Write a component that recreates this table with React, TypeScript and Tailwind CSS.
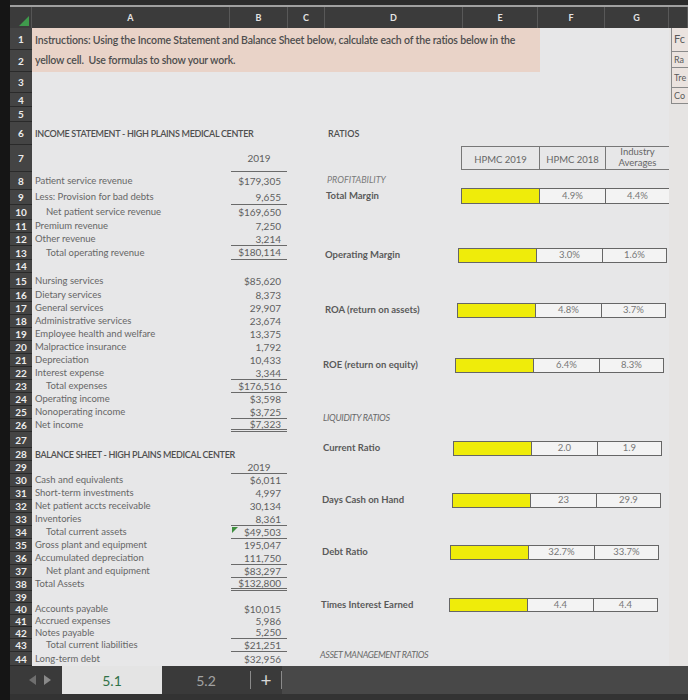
const ROW_H = [
  22, 22, 21, 14, 15, 23, 27, 18, 15, 15, 13, 13, 14, 13, 16,
  13, 13, 13, 13, 13, 13, 13, 13, 13, 13, 13,
  16, 13,
  13, 13, 13, 13, 13, 13, 13, 13, 13, 13,
  12, 12, 12, 12, 13, 14,
];

const HEIGHT_CLS: Record<number, string> = {
  11: "h-[11px]",
  12: "h-[12px]",
  13: "h-[13px]",
  14: "h-[14px]",
  15: "h-[15px]",
  16: "h-[16px]",
  18: "h-[18px]",
  21: "h-[21px]",
  22: "h-[22px]",
  23: "h-[23px]",
  27: "h-[27px]",
};

type Line = "single" | "double" | undefined;
type SheetRow = {
  label?: string;
  indent?: boolean;
  value?: string;
  center?: boolean;
  line?: Line;
  heading?: boolean;
  flag?: boolean;
};

// rows 6..44 of columns A and B
const SHEET: SheetRow[] = [
  { label: "INCOME STATEMENT - HIGH PLAINS MEDICAL CENTER", heading: true },
  { value: "2019", center: true, line: "single" },
  { label: "Patient service revenue", value: "$179,305" },
  { label: "Less: Provision for bad debts", value: "9,655", line: "single" },
  { label: "Net patient service revenue", indent: true, value: "$169,650" },
  { label: "Premium revenue", value: "7,250" },
  { label: "Other revenue", value: "3,214", line: "single" },
  { label: "Total operating revenue", indent: true, value: "$180,114", line: "single" },
  {},
  { label: "Nursing services", value: "$85,620" },
  { label: "Dietary services", value: "8,373" },
  { label: "General services", value: "29,907" },
  { label: "Administrative services", value: "23,674" },
  { label: "Employee health and welfare", value: "13,375" },
  { label: "Malpractice insurance", value: "1,792" },
  { label: "Depreciation", value: "10,433" },
  { label: "Interest expense", value: "3,344", line: "single" },
  { label: "Total expenses", indent: true, value: "$176,516", line: "single" },
  { label: "Operating income", value: "$3,598" },
  { label: "Nonoperating income", value: "$3,725", line: "single" },
  { label: "Net income", value: "$7,323", line: "double" },
  {},
  { label: "BALANCE SHEET - HIGH PLAINS MEDICAL CENTER", heading: true },
  { value: "2019", center: true, line: "single" },
  { label: "Cash and equivalents", value: "$6,011" },
  { label: "Short-term investments", value: "4,997" },
  { label: "Net patient accts receivable", value: "30,134" },
  { label: "Inventories", value: "8,361", line: "single" },
  { label: "Total current assets", indent: true, value: "$49,503", line: "single", flag: true },
  { label: "Gross plant and equipment", value: "195,047" },
  { label: "Accumulated depreciation", value: "111,750", line: "single" },
  { label: "Net plant and equipment", indent: true, value: "$83,297", line: "single" },
  { label: "Total Assets", value: "$132,800", line: "double" },
  {},
  { label: "Accounts payable", value: "$10,015" },
  { label: "Accrued expenses", value: "5,986" },
  { label: "Notes payable", value: "5,250", line: "single" },
  { label: "Total current liabilities", indent: true, value: "$21,251", line: "single" },
  { label: "Long-term debt", value: "$32,956" },
];

const COLS = [
  { k: "A", w: "w-[198px]" },
  { k: "B", w: "w-[58px]" },
  { k: "C", w: "w-[37px]" },
  { k: "D", w: "w-[138px]" },
  { k: "E", w: "w-[75px]" },
  { k: "F", w: "w-[67px]" },
  { k: "G", w: "w-[64px]" },
  { k: "", w: "w-[19px]" },
];

function ColumnHeader() {
  return (
    <div className="flex h-[21px] bg-[#3b3b3b]">
      <div className="relative w-[22px] border-r border-[#555]">
        <svg className="absolute bottom-[2px] right-[2px]" width="10" height="10" viewBox="0 0 10 10">
          <polygon points="10,0 10,10 0,10" fill="#3f9a4c" />
        </svg>
      </div>
      {COLS.map((c, i) => (
        <div
          key={i}
          className={`${c.w} flex items-center justify-center border-r border-[#585858] text-[9px] font-bold text-[#e4e4e4]`}
        >
          {c.k}
        </div>
      ))}
    </div>
  );
}

function RowNumbers() {
  return (
    <div className="flex w-[22px] shrink-0 flex-col bg-[#2e2e2e]">
      {ROW_H.map((h, i) => (
        <div
          key={i}
          className={`${HEIGHT_CLS[h]} flex items-center justify-center border-b border-[#2a2a2a] bg-[#444] text-[10px] font-bold leading-none text-[#ececec]`}
        >
          {i + 1}
        </div>
      ))}
    </div>
  );
}

function SheetRows() {
  return (
    <div className="flex w-[256px] shrink-0 flex-col">
      {SHEET.map((r, i) => {
        const h = HEIGHT_CLS[ROW_H[i + 5]];
        const line =
          r.line === "double"
            ? "border-b-[3px] border-double border-[#6a6a6a]"
            : r.line === "single"
              ? "border-b border-[#6a6a6a]"
              : "";
        return (
          <div key={i} className={`${h} flex items-center`}>
            <div
              className={`w-[198px] shrink-0 overflow-visible whitespace-nowrap ${
                r.indent ? "pl-[14px]" : "pl-[3px]"
              } ${
                r.heading
                  ? "text-[9px] font-semibold tracking-[-0.3px] text-[#4f4f4f]"
                  : "text-[9.5px] text-[#666]"
              }`}
            >
              {r.label}
            </div>
            <div className={`relative mx-[1px] flex h-full w-[56px] items-center ${line}`}>
              {r.flag && (
                <svg className="absolute left-[1px] top-[1px]" width="6" height="6" viewBox="0 0 6 6">
                  <polygon points="0,0 6,0 0,6" fill="#3e8e3e" />
                </svg>
              )}
              <span
                className={`w-full whitespace-nowrap text-[10px] text-[#5f5f5f] ${
                  r.center ? "text-center" : "pr-[6px] text-right"
                }`}
              >
                {r.value}
              </span>
            </div>
          </div>
        );
      })}
    </div>
  );
}

type Ratio = { label: string; f: string; g: string; top: string; h: string; lw: string; lp: string };

const RATIOS: Ratio[] = [
  { label: "Total Margin", f: "4.9%", g: "4.4%", top: "mt-0", h: "h-[16px]", lw: "w-[173px]", lp: "pl-[38px]" },
  { label: "Operating Margin", f: "3.0%", g: "1.6%", top: "mt-[44px]", h: "h-[15px]", lw: "w-[170px]", lp: "pl-[37px]" },
  { label: "ROA (return on assets)", f: "4.8%", g: "3.7%", top: "mt-[40px]", h: "h-[15px]", lw: "w-[169px]", lp: "pl-[37px]" },
  { label: "ROE (return on equity)", f: "6.4%", g: "8.3%", top: "mt-[40px]", h: "h-[15px]", lw: "w-[167px]", lp: "pl-[35px]" },
];

const RATIOS2: Ratio[] = [
  { label: "Current Ratio", f: "2.0", g: "1.9", top: "mt-[16px]", h: "h-[15px]", lw: "w-[165px]", lp: "pl-[35px]" },
  { label: "Days Cash on Hand", f: "23", g: "29.9", top: "mt-[37px]", h: "h-[15px]", lw: "w-[164px]", lp: "pl-[34px]" },
  { label: "Debt Ratio", f: "32.7%", g: "33.7%", top: "mt-[37px]", h: "h-[15px]", lw: "w-[162px]", lp: "pl-[34px]" },
  { label: "Times Interest Earned", f: "4.4", g: "4.4", top: "mt-[38px]", h: "h-[14px]", lw: "w-[161px]", lp: "pl-[33px]" },
];

function RatioRow({ r }: { r: Ratio }) {
  return (
    <div className={`${r.top} ${r.h} flex items-stretch`}>
      <div
        className={`${r.lw} ${r.lp} flex shrink-0 items-center whitespace-nowrap text-[9.5px] font-bold text-[#5a5a5a]`}
      >
        {r.label}
      </div>
      <div className="flex border border-[#666]">
        <div className="w-[77px] bg-[#efec0a]" />
        <div className="flex w-[66px] items-center justify-center border-l border-[#666] bg-[#f3f3f3] text-[9.5px] text-[#777]">
          {r.f}
        </div>
        <div className="flex w-[64px] items-center justify-center border-l border-[#666] bg-[#f3f3f3] text-[9.5px] text-[#777]">
          {r.g}
        </div>
      </div>
    </div>
  );
}

function RatioPanel() {
  return (
    <div className="flex w-[381px] shrink-0 flex-col">
      <div className="flex h-[23px] items-center pl-[40px] text-[9px] font-semibold text-[#4f4f4f]">RATIOS</div>
      <div className="flex h-[27px] items-start pl-[173px]">
        <div className="mt-[1px] flex h-[24px] border border-[#777]">
          <div className="flex w-[77px] items-end justify-center pb-[2px] text-[9.5px] text-[#666]">HPMC 2019</div>
          <div className="flex w-[66px] items-end justify-center border-l border-[#777] pb-[2px] text-[9.5px] text-[#666]">
            HPMC 2018
          </div>
          <div className="flex w-[64px] flex-col items-center justify-end border-l border-[#777] pb-[1px] text-[9.5px] leading-[11px] text-[#666]">
            <span>Industry</span>
            <span>Averages</span>
          </div>
        </div>
      </div>
      <div className="flex h-[16px] items-center pl-[39px] text-[9px] italic text-[#7a7a7a]">PROFITABILITY</div>
      {RATIOS.map((r) => (
        <RatioRow key={r.label} r={r} />
      ))}
      <div className="mt-[38px] flex h-[14px] items-center pl-[35px] text-[9px] italic tracking-[-0.3px] text-[#6a6a6a]">
        LIQUIDITY RATIOS
      </div>
      {RATIOS2.map((r) => (
        <RatioRow key={r.label} r={r} />
      ))}
      <div className="mt-[36px] flex h-[14px] items-center pl-[32px] text-[9px] italic tracking-[-0.4px] text-[#6a6a6a]">
        ASSET MANAGEMENT RATIOS
      </div>
    </div>
  );
}

function SideStrip() {
  const boxes = [
    { t: "Fc", h: "h-[24px]", s: "text-[11px]" },
    { t: "Ra", h: "h-[16px]", s: "text-[9px]" },
    { t: "Tre", h: "h-[20px]", s: "text-[9px]" },
    { t: "Co", h: "h-[16px]", s: "text-[9px]" },
  ];
  return (
    <div className="w-[19px] shrink-0 overflow-hidden bg-[#e6e4e3] pl-[2px]">
      {boxes.map((b) => (
        <div
          key={b.t}
          className={`${b.h} ${b.s} flex items-center overflow-hidden border-b border-l border-[#8a8a8a] bg-[#ebe3df] pl-[2px] text-[#5a5a5a]`}
        >
          {b.t}
        </div>
      ))}
    </div>
  );
}

function Tabs() {
  return (
    <div className="flex h-[28px] bg-[#3a3a3a]">
      <div className="flex w-[52px] items-center justify-center gap-[8px] pl-[8px]">
        <svg width="7" height="10" viewBox="0 0 7 10">
          <polygon points="7,0 7,10 0,5" fill="#6f6f6f" />
        </svg>
        <svg width="7" height="10" viewBox="0 0 7 10">
          <polygon points="0,0 0,10 7,5" fill="#8a8a8a" />
        </svg>
      </div>
      <div className="flex w-[100px] items-center justify-center bg-[#e4e4e4] text-[14px] text-[#2f7249]">5.1</div>
      <div className="flex w-[88px] items-center justify-center text-[14px] text-[#a3a3a3]">5.2</div>
      <div className="my-[5px] w-px bg-[#8a8a8a]" />
      <div className="flex w-[30px] items-center justify-center text-[19px] text-[#d8d8d8]">+</div>
      <div className="my-[5px] w-px bg-[#8a8a8a]" />
      <div className="flex-1 bg-[#484848]" />
    </div>
  );
}

export default function App() {
  return (
    <div className="flex h-[700px] w-[688px] overflow-hidden bg-[#141414] font-['Lato',sans-serif]">
      <div className="w-[10px] shrink-0 bg-[#151515]" />
      <div className="flex w-[678px] flex-col">
        <div className="h-[5px] bg-[#2c2c2c]" />
        <div className="h-[2px] bg-[#a0a0a0]" />
        <ColumnHeader />
        <div className="flex h-[638px]">
          <RowNumbers />
          <div className="flex w-[637px] flex-col bg-[#e7e7e8]">
            <div className="flex h-[44px] w-[508px] flex-col justify-center bg-[#e9d3c8] pl-[3px] text-[10.5px] font-semibold leading-[20px] tracking-[-0.17px] text-[#4d4d4d]">
              <span>Instructions: Using the Income Statement and Balance Sheet below, calculate each of the ratios below in the</span>
              <span>yellow cell.&nbsp; Use formulas to show your work.</span>
            </div>
            <div className="h-[50px]" />
            <div className="flex">
              <SheetRows />
              <RatioPanel />
            </div>
          </div>
          <SideStrip />
        </div>
        <Tabs />
        <div className="h-[6px] bg-[#333]" />
      </div>
    </div>
  );
}
